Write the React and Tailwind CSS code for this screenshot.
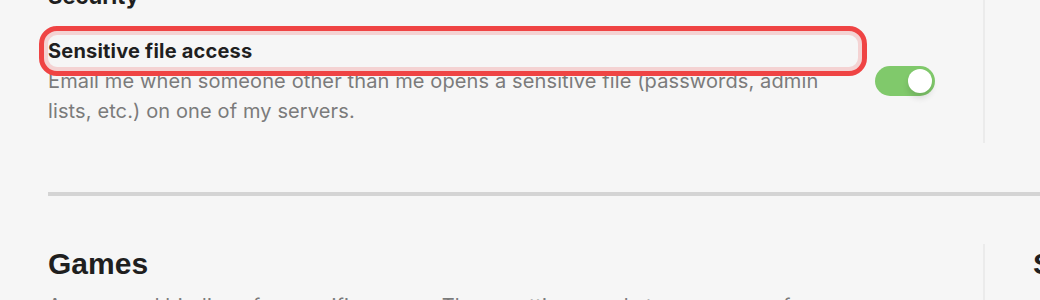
export default function App() {
  return (
    <div className="h-[300px] w-[1040px] overflow-hidden bg-[#f6f6f6] pl-12" style={{ fontFamily: "Inter, 'Noto Sans', sans-serif" }}>
      {/* Section: Security */}
      <div className="flex">
        <div className="w-[937px] shrink-0 border-r-2 border-[#ebebeb] pr-[48px] pb-[17px]">
          <h2 className="-mt-[17px] text-[22px] leading-[26px] font-bold text-[#1f1f1f]">Security</h2>
          <div className="mt-[27px] flex items-center justify-between">
            <div className="w-[810px]">
              <div className="relative">
                <div className="pointer-events-none absolute -left-[9px] -top-[10px] h-[50px] w-[828px] rounded-[18px] border-[5px] border-[#ef4444] shadow-[inset_0_0_0_4px_#f4d3d3]"></div>
                <div className="relative text-[20px] leading-[30px] font-bold tracking-[0.2px] text-[#1f1f1f]">Sensitive file access</div>
              </div>
              <p className="text-[20px] leading-[30px] tracking-[0.12px] text-[#7b7b7b]">
                Email me when someone other than me opens a sensitive file (passwords, admin lists, etc.) on one of my servers.
              </p>
            </div>
            <button className="relative h-[30px] w-[60px] shrink-0 rounded-full bg-[#80c96b]">
              <span className="absolute right-[3px] top-[3px] h-6 w-6 rounded-full bg-white shadow-[0_5px_6px_rgba(0,0,0,0.12)]"></span>
            </button>
          </div>
        </div>
        <div className="pl-12"></div>
      </div>

      <div className="mt-[49px] h-[4px] w-[1100px] bg-[#d4d4d4]"></div>

      {/* Section: Games */}
      <div className="mt-[48px] flex">
        <div className="w-[937px] shrink-0 border-r-2 border-[#ebebeb] pr-[48px]">
          <h2 className="pt-[2px] text-[30px] leading-[36px] font-bold text-[#1f1f1f]" style={{ fontFamily: "'Liberation Sans', Arial, sans-serif" }}>Games</h2>
          <p className="mt-[9px] text-[20px] leading-[30px] tracking-[0.12px] text-[#7b7b7b]">
            Access and bindings for specific games. These settings apply to every one of your servers at once.
          </p>
        </div>
        <div className="pl-12">
          <h2 className="pt-[2px] text-[30px] leading-[36px] font-bold text-[#1f1f1f] whitespace-nowrap" style={{ fontFamily: "'Liberation Sans', Arial, sans-serif" }}>Servers</h2>
        </div>
      </div>
    </div>
  );
}
